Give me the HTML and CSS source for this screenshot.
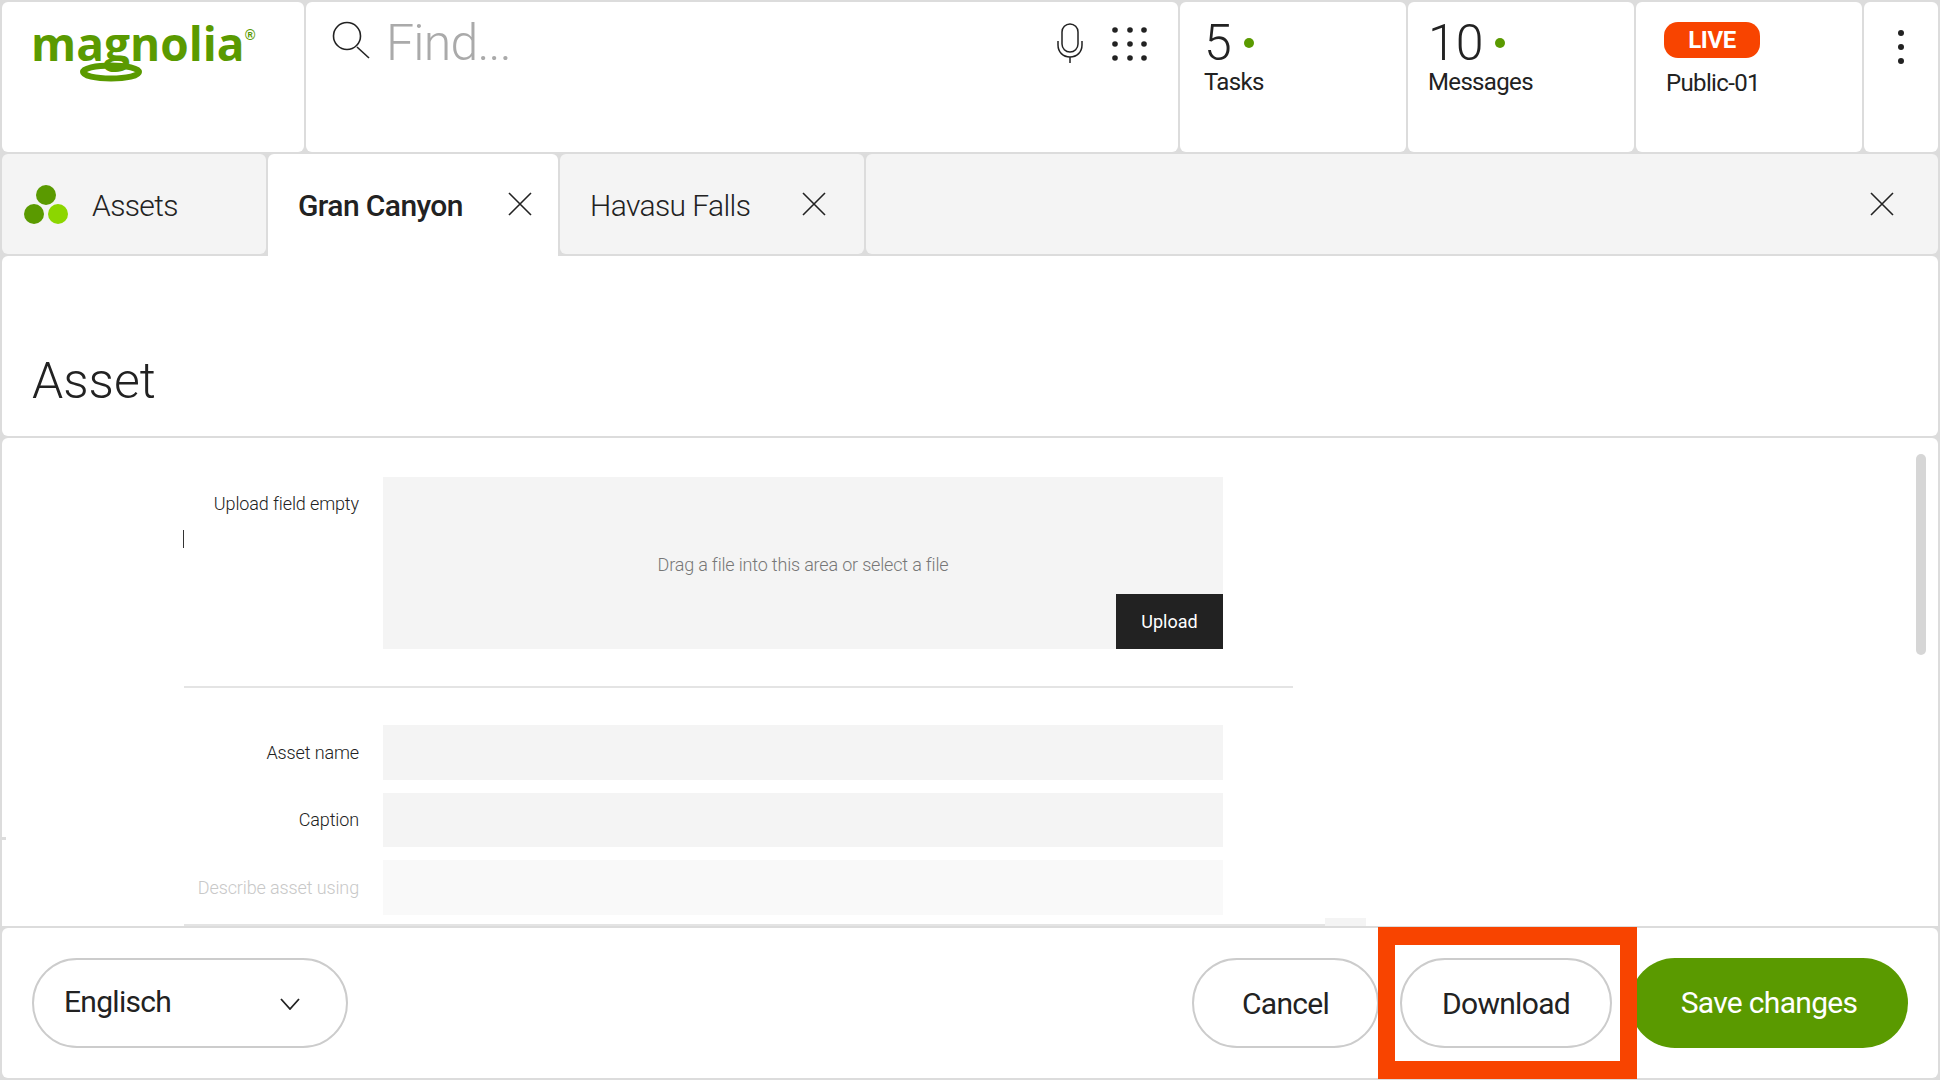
FILE: index.html
```html
<!DOCTYPE html>
<html lang="en">

<head>
  <meta charset="UTF-8">
  <meta name="viewport" content="width=device-width, initial-scale=1.0">
  <title>Asset</title>
  <link rel="stylesheet" href="styles.css">
</head>

<body>

  <header class="topbar">
    <div class="card logo-card">
      <svg class="logo" width="225" height="58" viewBox="0 0 225 58">
        <text class="logo-word" x="-1" y="36">magnolia</text>
        <ellipse cx="79" cy="47" rx="28" ry="6.5" fill="none" stroke="#5a9a00" stroke-width="6"/>
        <text class="logo-mark" x="213" y="15">®</text>
      </svg>
    </div>
    <div class="card search-card">
      <svg class="search-icon" width="38" height="38" viewBox="0 0 38 38">
        <circle cx="15" cy="15" r="13.5" fill="none" stroke="#222" stroke-width="1.6"/>
        <path d="M25 26 L37 37" stroke="#222" stroke-width="1.6"/>
      </svg>
      <span class="search-text">Find...</span>
      <svg class="mic-icon" width="26" height="40" viewBox="0 0 26 40">
        <rect x="5" y="1" width="16" height="28" rx="8" fill="none" stroke="#222" stroke-width="1.5"/>
        <path d="M1 18 V22 C1 29 6 34 13 34 C20 34 25 29 25 22 V18 M13 34 V40" fill="none" stroke="#222" stroke-width="1.5"/>
      </svg>
      <svg class="grid-icon" width="36" height="36" viewBox="0 0 36 36" fill="#222">
        <circle cx="3" cy="4" r="2.8"/><circle cx="18" cy="4" r="2.8"/><circle cx="32" cy="4" r="2.8"/>
        <circle cx="3" cy="18" r="2.8"/><circle cx="18" cy="18" r="2.8"/><circle cx="32" cy="18" r="2.8"/>
        <circle cx="3" cy="32" r="2.8"/><circle cx="18" cy="32" r="2.8"/><circle cx="32" cy="32" r="2.8"/>
      </svg>
    </div>
    <div class="card stat-card">
      <div class="stat-count">5<span class="stat-dot"></span></div>
      <div class="stat-label">Tasks</div>
    </div>
    <div class="card stat-card stat-card-wide">
      <div class="stat-count">10<span class="stat-dot"></span></div>
      <div class="stat-label">Messages</div>
    </div>
    <div class="card live-card">
      <span class="live-badge">LIVE</span>
      <div class="stat-label">Public-01</div>
    </div>
    <div class="card menu-card">
      <svg width="8" height="36" viewBox="0 0 8 36" fill="#222">
        <circle cx="4" cy="4" r="3"/><circle cx="4" cy="18" r="3"/><circle cx="4" cy="32" r="3"/>
      </svg>
    </div>
  </header>

  <nav class="tabs">
    <div class="tab tab-app">
      <svg class="app-icon" width="46" height="40" viewBox="0 0 46 40">
        <circle cx="23" cy="10" r="10" fill="#5a9a00"/>
        <circle cx="11" cy="29" r="10" fill="#5a9a00"/>
        <circle cx="35" cy="29" r="10" fill="#8cd600"/>
      </svg>
      <span>Assets</span>
    </div>
    <div class="tab tab-active">
      <span>Gran Canyon</span>
      <svg class="close-icon" width="24" height="24" viewBox="0 0 24 24"><path d="M1 1 L23 23 M23 1 L1 23"/></svg>
    </div>
    <div class="tab tab-second">
      <span>Havasu Falls</span>
      <svg class="close-icon" width="24" height="24" viewBox="0 0 24 24"><path d="M1 1 L23 23 M23 1 L1 23"/></svg>
    </div>
    <div class="tab tab-rest">
      <svg class="close-icon" width="24" height="24" viewBox="0 0 24 24"><path d="M1 1 L23 23 M23 1 L1 23"/></svg>
    </div>
  </nav>

  <section class="card title-card">
    <h1>Asset</h1>
  </section>

  <main class="card form-card">
    <span class="text-cursor"></span>
    <span class="card-notch"></span>
    <span class="scrollbar"></span>
    <form class="asset-form">
      <div class="field upload-field">
        <label class="field-label">Upload field empty</label>
        <div class="dropzone">
          <span class="dropzone-text">Drag a file into this area or select a file</span>
          <button type="button" class="upload-btn">Upload</button>
        </div>
      </div>
      <div class="divider"></div>
      <div class="field">
        <label class="field-label">Asset name</label>
        <div class="input"></div>
      </div>
      <div class="field">
        <label class="field-label">Caption</label>
        <div class="input"></div>
      </div>
      <div class="field field-faded">
        <label class="field-label">Describe asset using</label>
        <div class="input"></div>
      </div>
      <div class="form-end">
        <div class="form-end-line"></div>
        <div class="form-end-box"></div>
      </div>
    </form>
  </main>

  <footer class="card footer">
    <div class="pill lang-select">
      <span>Englisch</span>
      <svg width="20" height="12" viewBox="0 0 20 12"><path d="M1 1 L10 11 L19 1" fill="none" stroke="#222" stroke-width="1.8"/></svg>
    </div>
    <button type="button" class="pill cancel-btn">Cancel</button>
    <div class="highlight">
      <button type="button" class="pill download-btn">Download</button>
    </div>
    <button type="button" class="pill save-btn">Save changes</button>
  </footer>

</body>

</html>
```

FILE: styles.css
```css
* {
  box-sizing: border-box;
}

body {
  font-family: 'Roboto', 'Liberation Sans', sans-serif;
  background-color: #dcdcdc;
  color: #222;
  margin: 0;
  padding: 2px;
  height: 100vh;
  display: flex;
  flex-direction: column;
  gap: 2px;
  overflow: hidden;
}

.card {
  background-color: #fff;
  border-radius: 6px;
}

/* top bar */
.topbar {
  display: grid;
  grid-template-columns: 302px 872px 226px 226px 226px 1fr;
  gap: 2px;
  height: 150px;
}

.logo-card {
  padding: 23px 0 0 30px;
}

.logo {
  display: block;
  overflow: visible;
}

.logo-word {
  font-family: 'Open Sans', sans-serif;
  font-weight: 700;
  font-size: 46px;
  fill: #5a9a00;
}

.logo-mark {
  font-family: 'Liberation Sans', sans-serif;
  font-weight: 700;
  font-size: 14px;
  fill: #5a9a00;
}

.search-card {
  display: flex;
  align-items: flex-start;
  padding: 20px 30px 0 26px;
}

.search-icon {
  flex-shrink: 0;
  margin-top: -1px;
}

.search-text {
  font-size: 50px;
  font-weight: 300;
  letter-spacing: -0.8px;
  color: #aaa;
  line-height: 58px;
  margin: -8px 0 0 16px;
}

.mic-icon {
  margin: 1px 0 0 auto;
}

.grid-icon {
  margin: 4px 0 0 29px;
}

.stat-card {
  padding: 12px 0 0 24px;
}

.stat-card-wide {
  padding-left: 20px;
}

.stat-count {
  display: flex;
  align-items: center;
  font-size: 50px;
  font-weight: 300;
  line-height: 58px;
  height: 58px;
}

.stat-dot {
  width: 10px;
  height: 10px;
  border-radius: 50%;
  background-color: #5a9a00;
  margin-left: 12px;
}

.stat-label {
  font-size: 24px;
  letter-spacing: -0.65px;
  line-height: 30px;
  margin-top: -5px;
}

.live-card {
  padding: 20px 0 0 28px;
}

.live-badge {
  display: block;
  width: 96px;
  height: 36px;
  border-radius: 14px;
  background-color: #f84400;
  color: #fff;
  font-size: 24px;
  font-weight: 700;
  letter-spacing: -0.4px;
  line-height: 36px;
  text-align: center;
}

.live-card .stat-label {
  margin: 10px 0 0 2px;
}

.menu-card {
  padding: 27px 0 0 33px;
}

/* tabs */
.tabs {
  display: flex;
  gap: 2px;
  height: 100px;
}

.tab {
  display: flex;
  align-items: center;
  background-color: #f4f4f4;
  border-radius: 6px;
  font-size: 30px;
  font-weight: 300;
  letter-spacing: -0.6px;
}

.tab span {
  position: relative;
  top: 1px;
}

.tab-app {
  width: 264px;
  padding-left: 21px;
  gap: 23px;
}

.app-icon {
  margin-top: 2px;
}

.tab-active {
  width: 290px;
  height: 102px;
  background-color: #fff;
  border-radius: 6px 6px 0 0;
  font-weight: 500;
  padding: 0 26px 2px 30px;
  justify-content: space-between;
  z-index: 1;
}

.tab-second {
  width: 304px;
  padding: 0 38px 0 30px;
  justify-content: space-between;
}

.tab-rest {
  flex: 1;
  justify-content: flex-end;
  padding-right: 44px;
}

.close-icon {
  stroke: #222;
  stroke-width: 1.6;
  fill: none;
}

/* page title */
.title-card {
  height: 180px;
  padding: 95px 0 0 30px;
}

h1 {
  font-size: 50px;
  font-weight: 300;
  line-height: 60px;
  margin: 0;
}

/* form */
.form-card {
  flex: 1;
  position: relative;
  overflow: hidden;
  border-radius: 6px 6px 0 0;
}

.asset-form {
  width: 1182px;
  margin-left: 182px;
  padding-top: 39px;
}

.field {
  display: grid;
  grid-template-columns: 175px 840px;
  column-gap: 24px;
  margin-bottom: 13px;
  align-items: center;
}

.field-label {
  font-size: 18px;
  font-weight: 300;
  letter-spacing: -0.12px;
  text-align: right;
  color: #222;
}

.upload-field {
  align-items: start;
  margin-bottom: 0;
}

.upload-field .field-label {
  padding-top: 16px;
}

.dropzone {
  height: 172px;
  background-color: #f4f4f4;
  display: flex;
  align-items: center;
  justify-content: center;
  position: relative;
}

.dropzone-text {
  font-size: 18px;
  font-weight: 300;
  letter-spacing: -0.18px;
  color: #777;
  position: relative;
  top: 1px;
}

.upload-btn {
  position: absolute;
  right: 0;
  bottom: 0;
  width: 107px;
  height: 55px;
  background-color: #222;
  color: #fff;
  border: none;
  font-family: inherit;
  font-size: 18px;
  cursor: pointer;
}

.divider {
  width: 1109px;
  height: 2px;
  background-color: #e4e4e4;
  margin: 37px 0 37px;
}

.input {
  height: 54.5px;
  background-color: #f4f4f4;
}

.field-faded .field-label {
  color: #c8c8c8;
}

.field-faded .input {
  background-color: #f9f9f9;
}

.form-end {
  display: flex;
  align-items: flex-end;
  height: 8px;
  margin-top: -10px;
}

.form-end-line {
  width: 1141px;
  height: 2px;
  background-color: #e4e4e4;
}

.form-end-box {
  flex-shrink: 0;
  width: 41px;
  height: 8px;
  background-color: #f4f4f4;
}

.text-cursor {
  position: absolute;
  left: 181px;
  top: 92px;
  width: 1px;
  height: 18px;
  background-color: #333;
}

.card-notch {
  position: absolute;
  left: -2px;
  top: 399px;
  width: 6px;
  height: 3px;
  background-color: #dcdcdc;
}

.scrollbar {
  position: absolute;
  left: 1914px;
  top: 16px;
  width: 10px;
  height: 201px;
  border-radius: 5px;
  background-color: #d6d6d6;
}

/* footer */
.footer {
  height: 150px;
  display: flex;
  align-items: center;
  padding: 0 30px;
}

.pill {
  height: 90px;
  border: 2px solid #ccc;
  border-radius: 45px;
  background-color: #fff;
  font-family: inherit;
  font-size: 30px;
  letter-spacing: -0.7px;
  color: #222;
}

.lang-select {
  width: 316px;
  display: flex;
  align-items: center;
  justify-content: space-between;
  padding: 0 46px 4px 30px;
  margin-right: auto;
}

.lang-select svg {
  margin-top: 6px;
}

.cancel-btn {
  width: 187px;
}

.highlight {
  align-self: stretch;
  width: 259px;
  margin: -1px 0 -1px -1px;
  border-style: solid;
  border-color: #f84400;
  border-width: 18px 17px;
  padding-left: 5px;
  display: flex;
  align-items: center;
  position: relative;
  z-index: 1;
}

.download-btn {
  width: 212px;
}

.save-btn {
  width: 278px;
  margin-left: -7px;
  padding-bottom: 2px;
  border: none;
  background-color: #5a9a00;
  color: #fff;
}
```
